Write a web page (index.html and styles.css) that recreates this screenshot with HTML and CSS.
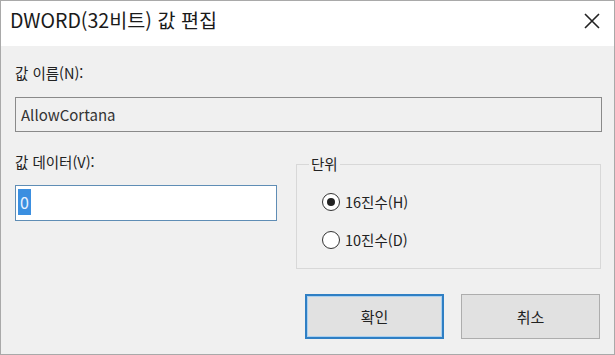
FILE: index.html
```html
<!DOCTYPE html>
<html lang="ko">
<head>
<meta charset="utf-8">
<link rel="stylesheet" href="styles.css">
</head>
<body>
<div class="window">
  <div class="titlebar">
    <span class="title">DWORD(32비트) 값 편집</span>
    <svg class="close" width="18" height="18" viewBox="0 0 18 18"><path d="M2 2 L16 16 M16 2 L2 16" stroke="#222" stroke-width="1.6" fill="none"/></svg>
  </div>
  <div class="main">
    <div class="label">값 이름(N):</div>
    <div class="name-box">AllowCortana</div>
    <div class="row">
      <div class="left">
        <div class="label">값 데이터(V):</div>
        <div class="data-box"><span class="sel">0</span></div>
      </div>
      <fieldset class="group">
        <legend>단위</legend>
        <div class="radio-row"><span class="radio checked"></span><span>16진수(H)</span></div>
        <div class="radio-row"><span class="radio"></span><span>10진수(D)</span></div>
      </fieldset>
    </div>
    <div class="buttons">
      <div class="btn primary">확인</div>
      <div class="btn">취소</div>
    </div>
  </div>
</div>
</body>
</html>
```
FILE: styles.css
```css
* { box-sizing: border-box; }
html, body { margin: 0; padding: 0; }
body {
  font-family: "Noto Sans CJK KR", "Noto Sans", "Liberation Sans", sans-serif;
  color: #111;
}
.window {
  width: 615px;
  height: 355px;
  border: 1px solid #a9a9a9;
  background: #f0f0f0;
  display: flex;
  flex-direction: column;
}
.titlebar {
  height: 45px;
  background: #fff;
  display: flex;
  justify-content: space-between;
  align-items: flex-start;
  padding: 7px 13px 0 9px;
}
.title {
  font-size: 19.6px;
  line-height: 24px;
  color: #1a1a1a;
}
.close { margin-top: 4px; }
.main {
  padding: 17px 12px 0 14px;
}
.label {
  font-size: 14.5px;
  line-height: 20px;
  color: #222;
}
.name-box {
  margin-top: 14px;
  height: 35px;
  border: 1px solid #8a8a8a;
  background: #f0f0f0;
  padding-left: 5px;
  font-size: 15px;
  line-height: 33px;
  color: #333;
}
.row {
  display: flex;
  margin-top: 20px;
}
.left {
  width: 262px;
}
.data-box {
  margin-top: 13px;
  height: 36px;
  border: 1px solid #5f8db5;
  background: #fff;
  padding: 3px 0 0 2px;
}
.sel {
  display: inline-block;
  background: #3b8fe0;
  color: #e8f2ff;
  font-size: 16px;
  line-height: 26px;
  padding: 0 2px;
}
.group {
  margin: 2px 0 0 19px;
  padding: 0 0 0 26px;
  width: 305px;
  height: 115px;
  border: 1px solid #d8d8d8;
  border-radius: 0;
}
.group legend {
  margin-left: -14px;
  padding: 0 2px;
  font-size: 14.5px;
  line-height: 20px;
  color: #222;
}
.radio-row {
  display: flex;
  align-items: center;
  gap: 5px;
  font-size: 14.5px;
  line-height: 20px;
  color: #222;
  height: 20px;
}
.radio-row:first-of-type { margin-top: 18px; }
.radio-row + .radio-row { margin-top: 18px; }
.radio {
  width: 18px;
  height: 18px;
  margin-left: -1px;
  border: 1.5px solid #333;
  border-radius: 50%;
  background: #fff;
  display: flex;
  align-items: center;
  justify-content: center;
}
.radio.checked::after {
  content: "";
  width: 8px;
  height: 8px;
  border-radius: 50%;
  background: #222;
}
.buttons {
  display: flex;
  justify-content: flex-end;
  gap: 17px;
  margin-top: 25px;
  padding-right: 2px;
}
.btn {
  width: 139px;
  height: 45px;
  background: #e1e1e1;
  border: 1px solid #adadad;
  font-size: 15px;
  line-height: 43px;
  text-align: center;
  color: #222;
}
.btn.primary {
  border: 2px solid #2f7fc4;
  line-height: 41px;
  box-shadow: inset 0 0 0 1px #a9d0f0;
}
```
